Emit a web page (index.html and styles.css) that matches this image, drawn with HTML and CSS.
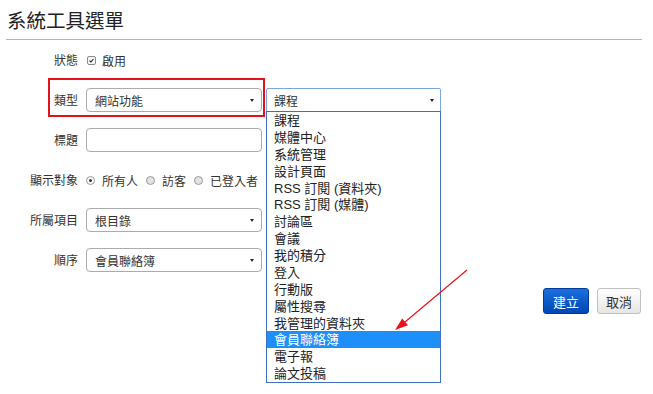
FILE: index.html
```html
<!DOCTYPE html>
<html lang="zh-Hant">
<head>
<meta charset="utf-8">
<title>系統工具選單</title>
<link rel="stylesheet" href="styles.css">
</head>
<body>
<div class="page">
  <h1 class="title">系統工具選單</h1>
  <form class="form">
    <div class="row">
      <label class="lbl">狀態</label>
      <span class="checkbox"><svg viewBox="0 0 9 9" width="9" height="9"><path d="M2 4.6 L3.8 6.4 L7 2.6" fill="none" stroke="#222" stroke-width="1.4"/></svg></span>
      <span class="check-text">啟用</span>
    </div>
    <div class="row row-type">
      <label class="lbl">類型</label>
      <div class="select">網站功能<span class="caret"></span></div>
      <div class="select-wrap">
        <div class="select select-open">課程<span class="caret"></span></div>
        <ul class="menu">
          <li>課程</li>
          <li>媒體中心</li>
          <li>系統管理</li>
          <li>設計頁面</li>
          <li>RSS 訂閱 (資料夾)</li>
          <li>RSS 訂閱 (媒體)</li>
          <li>討論區</li>
          <li>會議</li>
          <li>我的積分</li>
          <li>登入</li>
          <li>行動版</li>
          <li>屬性搜尋</li>
          <li>我管理的資料夾</li>
          <li class="active">會員聯絡簿</li>
          <li>電子報</li>
          <li>論文投稿</li>
        </ul>
      </div>
      <div class="redbox"></div>
    </div>
    <div class="row">
      <label class="lbl">標題</label>
      <div class="input"></div>
    </div>
    <div class="row">
      <label class="lbl">顯示對象</label>
      <span class="radio checked"></span><span class="radio-text">所有人</span>
      <span class="radio"></span><span class="radio-text">訪客</span>
      <span class="radio"></span><span class="radio-text">已登入者</span>
    </div>
    <div class="row">
      <label class="lbl">所屬項目</label>
      <div class="select">根目錄<span class="caret"></span></div>
    </div>
    <div class="row">
      <label class="lbl">順序</label>
      <div class="select">會員聯絡簿<span class="caret"></span></div>
    </div>
    <div class="actions">
      <button type="button" class="btn btn-primary">建立</button>
      <button type="button" class="btn btn-default">取消</button>
    </div>
  </form>
  <svg class="arrow" width="653" height="394" viewBox="0 0 653 394">
    <line x1="467" y1="270" x2="402" y2="324.5" stroke="#e8141c" stroke-width="1.2"/>
    <polygon points="395,330 402.2,318.4 408,325.2" fill="#e8141c"/>
  </svg>
</div>
</body>
</html>
```

FILE: styles.css
```css
* { box-sizing: border-box; }

body {
  margin: 0;
  background: #fff;
  color: #333;
  font-family: "Liberation Sans", "Noto Sans CJK TC", sans-serif;
  font-size: 12px;
}

.page {
  position: relative;
  width: 653px;
  height: 394px;
  padding: 0 11px 0 6px;
  overflow: hidden;
}

.title {
  margin: 0;
  padding: 8px 0 5px 1px;
  font-size: 19.5px;
  font-weight: normal;
  line-height: 26px;
  color: #222;
  border-bottom: 1px solid #b3b3b3;
}

.form {
  margin-top: 8px;
  display: flex;
  flex-direction: column;
  gap: 16px;
}

.row {
  position: relative;
  display: flex;
  align-items: center;
  height: 24px;
}

.lbl {
  flex: none;
  width: 72px;
  margin-right: 8px;
  text-align: right;
  line-height: 18px;
  padding-top: 1px;
}

.checkbox {
  display: inline-flex;
  width: 9px;
  height: 9px;
  margin-left: 1px;
  border: 1px solid #8a8a8a;
  border-radius: 2px;
  background: #f4f4f4;
  align-items: center;
  justify-content: center;
}

.checkbox svg { display: block; }

.check-text { margin-left: 6px; padding-top: 1px; }

.select {
  position: relative;
  flex: none;
  width: 176px;
  height: 24px;
  padding: 4px 0 0 8px;
  border: 1px solid #ababab;
  border-radius: 4px;
  line-height: 18px;
  background: #fff;
}

.caret {
  position: absolute;
  right: 7px;
  top: 10px;
  width: 0;
  height: 0;
  border-left: 2.5px solid transparent;
  border-right: 2.5px solid transparent;
  border-top: 3px solid #222;
}

.select-wrap {
  position: relative;
  flex: none;
  width: 175px;
  margin-left: 4px;
  z-index: 2;
}

.select-open {
  width: 175px;
  border-color: #7ba6e0;
  border-radius: 2px 2px 0 0;
  padding-left: 7px;
}

.select-open .caret { right: 6px; }

.menu {
  position: absolute;
  top: 23px;
  left: 0;
  width: 175px;
  margin: 0;
  padding: 0;
  list-style: none;
  border: 1px solid #3f6fc0;
  background: #fff;
  font-size: 13px;
  color: #222;
}

.menu li {
  height: 16.875px;
  line-height: 18px;
  padding-left: 7px;
  white-space: nowrap;
  overflow: hidden;
}

.menu li.active {
  background: #1e8ff8;
  color: #fff;
}

.redbox {
  position: absolute;
  left: 42px;
  top: -10px;
  width: 217px;
  height: 39px;
  border: 2px solid #e3111b;
  pointer-events: none;
}

.input {
  flex: none;
  width: 176px;
  height: 24px;
  border: 1px solid #ababab;
  border-radius: 4px;
  background: #fff;
}

.radio {
  flex: none;
  width: 9px;
  height: 9px;
  border: 1px solid #9a9a9a;
  border-radius: 50%;
  background: #e2e2e2;
  position: relative;
}

.radio.checked { background: #fafafa; }

.radio.checked::after {
  content: "";
  position: absolute;
  left: 2px;
  top: 2px;
  width: 3px;
  height: 3px;
  border-radius: 50%;
  background: #333;
}

.radio-text { margin: 0 8px 0 7px; padding-top: 1px; }

.actions {
  display: flex;
  justify-content: flex-end;
  gap: 8px;
  padding-right: 1px;
}

.btn {
  height: 26px;
  padding: 0;
  font-family: "Liberation Sans", "Noto Sans CJK TC", sans-serif;
  font-size: 13px;
  border-radius: 3px;
  cursor: pointer;
}

.btn-primary {
  width: 46px;
  color: #fff;
  background: linear-gradient(#1b6fe0, #0047b3);
  border: 1px solid #003c98;
}

.btn-default {
  width: 44px;
  color: #333;
  background: linear-gradient(#ffffff, #e6e6e6);
  border: 1px solid #c0c0c0;
}

.arrow {
  position: absolute;
  left: 0;
  top: 0;
  pointer-events: none;
  z-index: 3;
}
```
